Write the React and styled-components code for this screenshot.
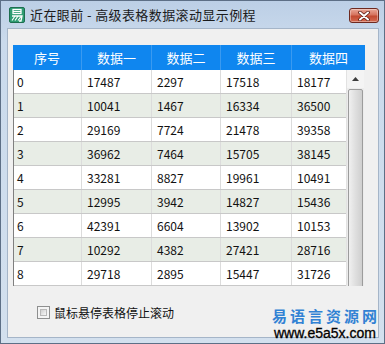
import React from "react";
import styled, { createGlobalStyle } from "styled-components";

const GlobalStyle = createGlobalStyle`
  html, body {
    margin: 0;
    padding: 0;
    background: #ffffff;
  }
  body {
    font-family: "Noto Sans CJK SC", "Noto Sans", sans-serif;
  }
`;

const rows = [
  [0, 17487, 2297, 17518, 18177],
  [1, 10041, 1467, 16334, 36500],
  [2, 29169, 7724, 21478, 39358],
  [3, 36962, 7464, 15705, 38145],
  [4, 33281, 8827, 19961, 10491],
  [5, 12995, 3942, 14827, 15436],
  [6, 42391, 6604, 13902, 10153],
  [7, 10292, 4382, 27421, 28716],
  [8, 29718, 2895, 15447, 31726],
];

const headers = ["序号", "数据一", "数据二", "数据三", "数据四"];

const Window = styled.div`
  position: relative;
  width: 385px;
  height: 344px;
  box-sizing: border-box;
  border: 1px solid #5d6f86;
  background: linear-gradient(to bottom, #bccfe6 0px, #cadaec 40px, #d3e0ee 100%);
  display: flex;
  flex-direction: column;
  padding: 0 5px 5px 6px;
`;

const TitleBar = styled.div`
  height: 27px;
  display: flex;
  align-items: center;
  gap: 5px;
  padding-left: 2px;
`;

const Title = styled.span`
  font-size: 13px;
  letter-spacing: 0.4px;
  color: #1b1b1b;
  white-space: nowrap;
`;

const CloseButton = styled.div`
  margin-left: auto;
  margin-top: 2px;
  width: 30px;
  height: 15px;
  box-sizing: border-box;
  border: 1px solid #6e2a20;
  border-radius: 3px;
  background: linear-gradient(to bottom, #e9a898 0%, #d6735e 45%, #c24a31 55%, #d46a50 100%);
  display: flex;
  align-items: center;
  justify-content: center;
  box-shadow: inset 0 0 0 1px rgba(255, 255, 255, 0.35);
`;

const Client = styled.div`
  flex: 1;
  background: #f0f0f0;
  border: 1px solid #a5b5c8;
  display: flex;
  flex-direction: column;
  padding: 16px 0 0 5px;
`;

const Table = styled.div`
  width: 352px;
  display: flex;
  flex-direction: column;
`;

const HeaderRow = styled.div`
  display: grid;
  grid-template-columns: 69px 70px 69px 71px 73px;
  height: 25px;
  background: #0f86ef;
`;

const HeaderCell = styled.div`
  display: flex;
  align-items: center;
  justify-content: center;
  color: #ffffff;
  font-size: 13px;
  border-right: 1px solid #3a9af0;
  &:last-child {
    border-right: none;
  }
`;

const Body = styled.div`
  display: flex;
  height: 216px;
  overflow: hidden;
  border-left: 1px solid #7f7f7f;
`;

const Rows = styled.div`
  width: 332px;
  overflow: hidden;
`;

const Row = styled.div`
  display: grid;
  grid-template-columns: 68px 70px 69px 71px 73px;
  height: 24px;
  box-sizing: border-box;
  border-bottom: 1px solid #c8c8c8;
  background: ${(p) => (p.$alt ? "#e8ede6" : "#ffffff")};
`;

const Cell = styled.div`
  display: flex;
  align-items: center;
  padding-left: ${(p) => (p.$first ? "3px" : "5px")};
  font-size: 12px;
  color: #111111;
  border-right: 1px solid #dcdcdc;
  white-space: nowrap;
`;

const ScrollBar = styled.div`
  width: 17px;
  display: flex;
  flex-direction: column;
  background: #ececec;
  border-left: 1px solid #e2e2e2;
`;

const ScrollArrow = styled.div`
  height: 18px;
  display: flex;
  align-items: center;
  justify-content: center;
  background: #f4f4f4;
`;

const Thumb = styled.div`
  flex: 1;
  margin: 1px 1px -20px 1px;
  border: 1px solid #9c9c9c;
  border-radius: 2px;
  background: linear-gradient(to right, #f0f0f0 0%, #e0e0e0 45%, #cfcfcf 100%);
`;

const Footer = styled.div`
  display: flex;
  align-items: center;
  gap: 4px;
  margin-top: 18px;
  padding-left: 24px;
`;

const CheckBox = styled.span`
  width: 13px;
  height: 13px;
  box-sizing: border-box;
  border: 1px solid #8e8f8f;
  background: #f4f4f4;
  display: flex;
  padding: 2px;
  &::after {
    content: "";
    flex: 1;
    border: 1px solid #b8b8b8;
    background: linear-gradient(135deg, #cfcfcf, #f7f7f7);
  }
`;

const Label = styled.span`
  font-size: 12px;
  color: #111111;
`;

const Watermark = styled.div`
  position: absolute;
  left: 271px;
  top: 306px;
  display: flex;
  flex-direction: column;
  align-items: flex-start;
`;

const MarkTitle = styled.span`
  font-family: "Noto Sans CJK SC", sans-serif;
  font-weight: 700;
  font-size: 15px;
  letter-spacing: 3px;
  line-height: 18px;
  color: #3282d4;
`;

const MarkUrl = styled.span`
  font-family: "Liberation Sans", Arial, sans-serif;
  font-size: 14px;
  line-height: 16px;
  margin-left: 2px;
  color: #000000;
  -webkit-text-stroke: 0.3px #000000;
`;

const AppIcon = () => (
  <svg width="16" height="16" viewBox="0 0 16 16">
    <rect x="0.5" y="0.5" width="15" height="15" rx="1.5" fill="#2e9c72" stroke="#1d6e4f" />
    <rect x="4" y="2.5" width="8" height="4" fill="none" stroke="#ffffff" strokeWidth="1.3" />
    <line x1="4" y1="4.5" x2="12" y2="4.5" stroke="#ffffff" strokeWidth="1.1" />
    <path d="M3 9 H13 L12 14 H10" fill="none" stroke="#ffffff" strokeWidth="1.3" />
    <path d="M6 9 L3 13.5 M9 9 L6 13.5 M12 9.5 L9 13.5" fill="none" stroke="#ffffff" strokeWidth="1.2" />
  </svg>
);

const CloseIcon = () => (
  <svg width="12" height="10" viewBox="0 0 12 10">
    <path d="M2 1.5 L10 8.5 M10 1.5 L2 8.5" stroke="#5a1c14" strokeWidth="3.6" strokeLinecap="round" />
    <path d="M2 1.5 L10 8.5 M10 1.5 L2 8.5" stroke="#ffffff" strokeWidth="2" strokeLinecap="round" />
  </svg>
);

const UpArrow = () => (
  <svg width="7" height="4" viewBox="0 0 7 4">
    <path d="M0 4 L3.5 0 L7 4 Z" fill="#3c3c3c" />
  </svg>
);

const App = () => {
  return (
    <>
      <GlobalStyle />
      <Window>
        <TitleBar>
          <AppIcon />
          <Title>近在眼前 - 高级表格数据滚动显示例程</Title>
          <CloseButton>
            <CloseIcon />
          </CloseButton>
        </TitleBar>
        <Client>
          <Table>
            <HeaderRow>
              {headers.map((h) => (
                <HeaderCell key={h}>{h}</HeaderCell>
              ))}
            </HeaderRow>
            <Body>
              <Rows>
                {rows.map((r, i) => (
                  <Row key={i} $alt={i % 2 === 1}>
                    {r.map((v, j) => (
                      <Cell key={j} $first={j === 0}>
                        {v}
                      </Cell>
                    ))}
                  </Row>
                ))}
              </Rows>
              <ScrollBar>
                <ScrollArrow>
                  <UpArrow />
                </ScrollArrow>
                <Thumb />
              </ScrollBar>
            </Body>
          </Table>
          <Footer>
            <CheckBox />
            <Label>鼠标悬停表格停止滚动</Label>
          </Footer>
        </Client>
        <Watermark>
          <MarkTitle>易语言资源网</MarkTitle>
          <MarkUrl>www.e5a5x.com</MarkUrl>
        </Watermark>
      </Window>
    </>
  );
};

export default App;
